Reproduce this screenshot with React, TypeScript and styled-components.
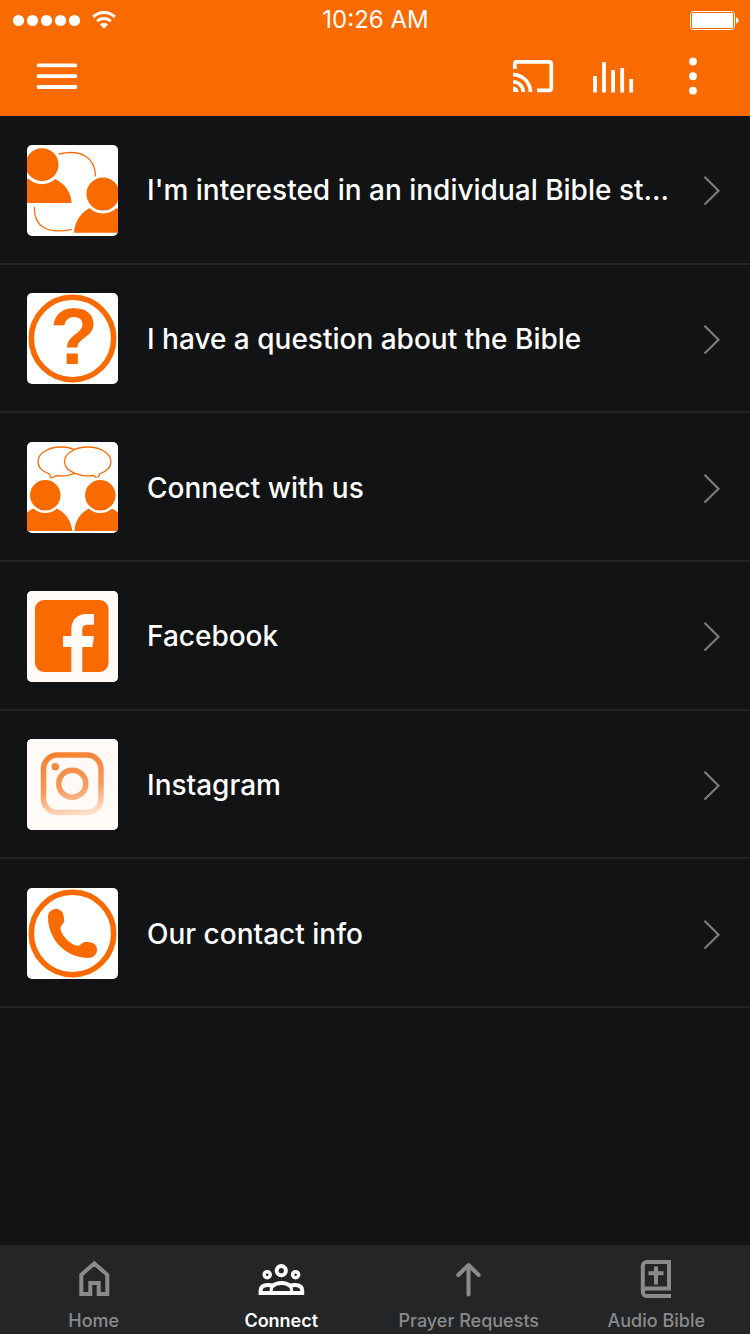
import React from "react";
import styled, { createGlobalStyle } from "styled-components";

const ORANGE = "#f96a00";

const GlobalStyle = createGlobalStyle`
  *, *::before, *::after { box-sizing: border-box; }
  body {
    margin: 0;
    background: #121315;
    font-family: Inter, "Liberation Sans", sans-serif;
  }
`;

const Screen = styled.div`
  display: flex;
  flex-direction: column;
  min-height: 100vh;
  background: #121315;
  color: #fff;
`;

const Header = styled.header`
  background: ${ORANGE};
  padding-bottom: 4px;
`;

const StatusBar = styled.div`
  display: grid;
  grid-template-columns: 1fr auto 1fr;
  align-items: center;
  height: 40px;
  padding: 0 11px 0 12px;
`;

const Signal = styled.div`
  display: flex;
  align-items: center;
  gap: 10px;
`;

const Clock = styled.time`
  font-size: 24px;
  line-height: 40px;
`;

const Battery = styled.svg`
  justify-self: end;
`;

const Toolbar = styled.div`
  display: flex;
  align-items: center;
  justify-content: space-between;
  height: 72px;
  padding: 0 33px;
`;

const Actions = styled.div`
  display: flex;
  gap: 32px;
`;

const IconButton = styled.button`
  display: block;
  padding: 0;
  border: 0;
  background: none;
  color: #fff;
  cursor: pointer;

  svg { display: block; }
`;

const List = styled.ul`
  display: grid;
  grid-auto-rows: 1fr;
  min-height: 892px;
  margin: 0;
  padding: 0;
  list-style: none;
`;

const Item = styled.li`
  display: flex;
  min-width: 0;
  box-shadow: inset 0 -2px #222325;
`;

const RowLink = styled.a`
  display: flex;
  flex: 1;
  align-items: center;
  min-width: 0;
  padding: 0 29px 0 27px;
  color: inherit;
  text-decoration: none;
`;

const Thumb = styled.svg`
  flex: none;
  width: 91px;
  height: 91px;
  border-radius: 5px;
  background: #fff;
`;

const Title = styled.span`
  flex: 1;
  min-width: 0;
  margin: 0 24px 0 29px;
  overflow: hidden;
  font-size: 28px;
  font-weight: 500;
  line-height: 40px;
  text-overflow: ellipsis;
  white-space: nowrap;
`;

const Chevron = styled.svg`
  flex: none;
  color: #7a7b7d;
`;

const TabBar = styled.nav`
  display: grid;
  grid-template-columns: repeat(4, 1fr);
  margin-top: auto;
  background: #242527;
`;

const Tab = styled.a<{ $active?: boolean }>`
  display: flex;
  flex-direction: column;
  align-items: center;
  gap: 10px;
  padding: 15px 0 2px;
  color: ${(p) => (p.$active ? "#fff" : "#8a8b8c")};
  font-size: 18px;
  font-weight: ${(p) => (p.$active ? 600 : 500)};
  line-height: 22px;
  text-decoration: none;
  white-space: nowrap;
`;

const StudyArt = () => (
  <g fill={ORANGE}>
    <path d="M-15 58C-14 42 -2 31 14 31C31 31 44 43 44.5 58Z" />
    <circle cx="15" cy="19.7" r="18" stroke="#fff" strokeWidth="3" />
    <path d="M47 87.7C48 72 60 60 76 60C92 60 104 72 106 87.7Z" />
    <circle cx="76" cy="49" r="18" stroke="#fff" strokeWidth="3" />
    <path d="M31.7 9C54 4 68 12 68.5 31.5M7.3 61.7C7 82 20 89.5 45 84.3" fill="none" stroke={ORANGE} strokeWidth="1.3" />
  </g>
);

const QuestionArt = () => (
  <g>
    <circle cx="45.5" cy="45.5" r="41.2" fill="none" stroke={ORANGE} strokeWidth="5.6" />
    <text x="47" y="71" textAnchor="middle" fontFamily="Liberation Sans, sans-serif" fontWeight="700" fontSize="79" fill={ORANGE}>?</text>
  </g>
);

const TalkArt = () => (
  <g fill={ORANGE}>
    <g fill="#fff" stroke={ORANGE} strokeWidth="1.3" strokeLinejoin="round">
      <path d="M24 36.500L22.500 32C15 29.500 11 25 11 19.500C11 11.500 21 5 34 5C47 5 57 11.500 57 19.500C57 27.500 47 34 34 34L29 33.700Z" />
      <path d="M70.700 36.700L67 33.500C54 35.500 37.500 30 37.500 19.500C37.500 11.500 48 5 60.700 5C73.500 5 84 11.500 84 19.500C84 25 79.500 29.500 72.500 32Z" />
    </g>
    <path d="M-9 89C-8 74 4 64 18.300 64C33 64 44 75 45.300 89Z" />
    <path d="M47.300 89C48 75 59 64 73.300 64C88 64 99 75 101 89Z" />
    <circle cx="18.3" cy="53.3" r="16.5" stroke="#fff" strokeWidth="2.5" />
    <circle cx="73.3" cy="53.3" r="16.5" stroke="#fff" strokeWidth="2.5" />
  </g>
);

const FacebookArt = () => (
  <g>
    <rect width="91" height="91" fill="#fffaf6" />
    <rect x="8" y="9" width="73.5" height="72" rx="9" fill={ORANGE} />
    <path d="M44.300 81V56H36V45H44.300V39C44.300 29 50 23 59.500 23H67V33.700H61C57 33.700 55.300 35.500 55.300 39V45H67L65.500 56H55.300V81Z" fill="#fffaf6" />
  </g>
);

const InstagramArt = () => (
  <g>
    <defs>
      <linearGradient id="insta" gradientUnits="userSpaceOnUse" x1="38" y1="13" x2="50" y2="78">
        <stop offset="0" stopColor="#f5812f" />
        <stop offset="0.55" stopColor="#f89a5c" />
        <stop offset="1" stopColor="#fde3d0" />
      </linearGradient>
    </defs>
    <rect width="91" height="91" fill="#fffaf6" />
    <g fill="none" stroke="url(#insta)" strokeWidth="5.5">
      <rect x="16.5" y="16" width="57.5" height="57.5" rx="14" />
      <circle cx="45.3" cy="44.7" r="13.5" />
    </g>
    <circle cx="28.3" cy="27.7" r="3.8" fill="#f58a40" />
  </g>
);

const PhoneArt = () => (
  <g>
    <circle cx="45.5" cy="45.5" r="41.2" fill="none" stroke={ORANGE} strokeWidth="5.6" />
    <path d="M21 29C21 24 24.500 21 29 21C33 21 35.800 23.500 36.300 26.500L37.300 32C37.800 35.500 33 37 33.500 41C35 48 43 56.500 50 57.800C54 58 55 53.500 59.500 53.700L64 54.500C68 55.300 70.300 58.500 70 62.500C69.500 67.500 65.500 70 60 70C38 69 21 51 21 29Z" fill={ORANGE} />
  </g>
);

const items = [
  { title: "I'm interested in an individual Bible st...", Art: StudyArt },
  { title: "I have a question about the Bible", Art: QuestionArt },
  { title: "Connect with us", Art: TalkArt },
  { title: "Facebook", Art: FacebookArt },
  { title: "Instagram", Art: InstagramArt },
  { title: "Our contact info", Art: PhoneArt },
];

const HomeIcon = () => (
  <path d="M11.300 34V14.800L24.300 3.500L37.300 14.800V34H28.700V23H20.300V34Z" strokeWidth="4" />
);

const PeopleIcon = () => (
  <g strokeWidth="4">
    <circle cx="24.3" cy="10.7" r="4.6" />
    <circle cx="10.2" cy="14.7" r="3" strokeWidth="3.5" />
    <circle cx="38.6" cy="14.7" r="3" strokeWidth="3.5" />
    <path d="M3.600 33V30.500C3.600 26.500 7 25 11 25C13 25 14.500 25.300 15.500 26C20 22 29 22 33.300 26C34.300 25.300 36 25 38 25C42 25 45.200 26.500 45.200 30.500V33Z" />
    <path d="M15.500 26C14.300 27.500 14 29 14 33M33.300 26C34.500 27.500 34.800 29 34.800 33" strokeWidth="3" />
  </g>
);

const ArrowIcon = () => (
  <path d="M23.500 34.500V5M13.300 15L23.500 5L33.700 15" strokeWidth="4" strokeLinecap="round" strokeLinejoin="round" />
);

const BookIcon = () => (
  <path d="M39 36H14.500A3.800 3.800 0 0 1 10.800 32.200V6A4 4 0 0 1 14.800 2H37V28.500H14.500A3.800 3.800 0 0 0 10.800 32.200M24 6.500V24.500M16.500 13.300H31.500" strokeWidth="4" />
);

const tabs = [
  { label: "Home", Icon: HomeIcon },
  { label: "Connect", Icon: PeopleIcon, active: true },
  { label: "Prayer Requests", Icon: ArrowIcon },
  { label: "Audio Bible", Icon: BookIcon },
];

export default function App() {
  return (
    <Screen>
      <GlobalStyle />
      <Header>
        <StatusBar>
          <Signal>
            <svg width="70" height="20" viewBox="0 0 70 20" fill="#fff" aria-hidden="true">
              {[0, 1, 2, 3, 4].map((n) => (
                <circle key={n} cx={6.5 + n * 14} cy="10.5" r="5.6" />
              ))}
            </svg>
            <svg width="24" height="20" viewBox="0 0 24 20" fill="none" stroke="#fff" strokeWidth="3" aria-hidden="true">
              <path d="M1.200 6.800C7.500 0.900 16.500 0.900 22.800 6.800" />
              <path d="M5.200 11.200C9 7.600 15 7.600 18.800 11.200" />
              <path d="M8 14.500C10 12.500 14 12.500 16 14.500L12 18.800Z" fill="#fff" stroke="none" />
            </svg>
          </Signal>
          <Clock>10:26 AM</Clock>
          <Battery width="50" height="20" viewBox="0 0 50 20" aria-hidden="true">
            <rect x="1.5" y="1.5" width="44" height="18" rx="3" fill="none" stroke="#fff" />
            <rect x="3" y="3" width="41" height="15" rx="1.5" fill="#fff" />
            <path d="M47 7.500C50.500 8.500 50.500 12.500 47 13.500Z" fill="#fff" />
          </Battery>
        </StatusBar>
        <Toolbar>
          <IconButton type="button" aria-label="Menu">
            <svg width="48" height="48" viewBox="0 0 48 48" stroke="currentColor" strokeWidth="3.8" strokeLinecap="round">
              <path d="M5.500 13.300H42.500M5.500 24.200H42.500M5.500 35H42.500" />
            </svg>
          </IconButton>
          <Actions>
            <IconButton type="button" aria-label="Cast">
              <svg width="48" height="48" viewBox="0 0 48 48" fill="none" stroke="currentColor" strokeWidth="3.7">
                <path d="M5.800 17V11.500A2 2 0 0 1 7.800 9.800H40.500A2 2 0 0 1 42.300 11.500V36.500A2 2 0 0 1 40.500 38.300H28" />
                <path d="M4 22.600A17.500 17.500 0 0 1 21.500 40M4 29.800A10.200 10.200 0 0 1 14.200 40" />
                <path d="M4 34.500A5.500 5.500 0 0 1 9.500 40H4Z" fill="currentColor" stroke="none" />
              </svg>
            </IconButton>
            <IconButton type="button" aria-label="Now playing">
              <svg width="48" height="48" viewBox="0 0 48 48" stroke="currentColor" strokeWidth="3.8">
                <path d="M6 24V40.500M15 10V40.500M24.100 18V40.500M33.200 16V40.500M42.200 27V40.500" />
              </svg>
            </IconButton>
            <IconButton type="button" aria-label="More options">
              <svg width="48" height="48" viewBox="0 0 48 48" fill="currentColor">
                <circle cx="24" cy="9.5" r="3.9" />
                <circle cx="24" cy="24.2" r="3.9" />
                <circle cx="24" cy="38.7" r="3.9" />
              </svg>
            </IconButton>
          </Actions>
        </Toolbar>
      </Header>
      <main>
        <List>
          {items.map(({ title, Art }) => (
            <Item key={title}>
              <RowLink href="#">
                <Thumb viewBox="0 0 91 91" aria-hidden="true">
                  <Art />
                </Thumb>
                <Title>{title}</Title>
                <Chevron width="18" height="30" viewBox="0 0 18 30" fill="none" stroke="currentColor" strokeWidth="2.2" aria-hidden="true">
                  <path d="M1.500 1.800L15.500 15.800L1.500 29.500" />
                </Chevron>
              </RowLink>
            </Item>
          ))}
        </List>
      </main>
      <TabBar aria-label="Main">
        {tabs.map(({ label, Icon, active }) => (
          <Tab key={label} href="#" $active={active} aria-current={active ? "page" : undefined}>
            <svg width="48" height="40" viewBox="0 0 48 40" fill="none" stroke="currentColor" aria-hidden="true">
              <Icon />
            </svg>
            {label}
          </Tab>
        ))}
      </TabBar>
    </Screen>
  );
}
